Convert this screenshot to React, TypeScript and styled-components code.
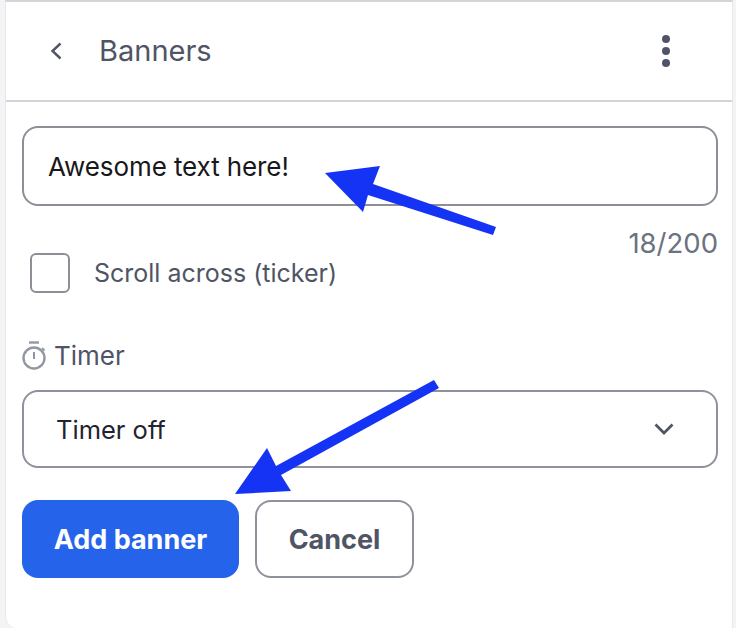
import styled, { createGlobalStyle } from 'styled-components';

const GlobalStyle = createGlobalStyle`
    html, body {
        margin: 0;
        padding: 0;
        background: #f3f4f6;
        font-family: 'Inter', 'Liberation Sans', sans-serif;
    }
`;

const Page = styled.div`
    position: relative;
    width: 736px;
    height: 628px;
    overflow: hidden;
    background: #f3f4f6;
    box-sizing: border-box;
    padding: 0 3px 0 5px;
`;

const Panel = styled.div`
    height: 100%;
    box-sizing: border-box;
    background: #fff;
    border-top: 2px solid #d4d4d8;
    border-left: 1px solid #e5e7eb;
    border-right: 1px solid #e5e7eb;
    border-bottom-left-radius: 12px;
`;

const Header = styled.div`
    height: 100px;
    box-sizing: border-box;
    border-bottom: 2px solid #d4d4d8;
    display: flex;
    align-items: center;
    padding: 0 62px 0 44px;
    color: #4b5563;
`;

const Title = styled.span`
    flex: 1;
    margin-left: 37px;
    font-size: 29px;
    line-height: 34px;
    color: #4f5565;
`;

const Body = styled.div`
    padding: 24px 14px 0 16px;
`;

const TextField = styled.div`
    height: 80px;
    box-sizing: border-box;
    border: 2px solid #8e8e96;
    border-radius: 16px;
    display: flex;
    align-items: center;
    padding: 0 24px;
    font-size: 26px;
    letter-spacing: -0.1px;
    color: #18181b;
`;

const Counter = styled.div`
    margin-top: 22px;
    text-align: right;
    font-size: 27.5px;
    line-height: 30px;
    color: #6b7280;
`;

const CheckRow = styled.label`
    display: flex;
    align-items: center;
    gap: 24px;
    margin: -5px 0 0 8px;
    font-size: 25px;
    line-height: 40px;
    color: #4f5565;
`;

const Checkbox = styled.span`
    width: 40px;
    height: 40px;
    box-sizing: border-box;
    border: 2.5px solid #8e8e96;
    border-radius: 6px;
`;

const FieldLabel = styled.div`
    display: flex;
    align-items: center;
    gap: 8px;
    margin-top: 45px;
    font-size: 26px;
    line-height: 36px;
    color: #4f5565;
`;

const SelectBox = styled.div`
    height: 78px;
    margin-top: 16px;
    box-sizing: border-box;
    border: 2px solid #8e929c;
    border-radius: 16px;
    display: flex;
    align-items: center;
    justify-content: space-between;
    padding: 0 42px 0 32px;
    font-size: 25.5px;
    color: #1f2430;
`;

const Actions = styled.div`
    display: flex;
    gap: 16px;
    margin-top: 32px;
`;

const Button = styled.button<{ $primary?: boolean }>`
    height: 78px;
    width: ${(p) => (p.$primary ? '217px' : '159px')};
    box-sizing: border-box;
    border: ${(p) => (p.$primary ? 'none' : '2px solid #8e929c')};
    border-radius: 16px;
    background: ${(p) => (p.$primary ? '#2563eb' : '#fff')};
    color: ${(p) => (p.$primary ? '#fff' : '#4f5565')};
    font-family: inherit;
    font-size: 27px;
    font-weight: 700;
    padding: 0;
`;

const ArrowLayer = styled.svg`
    position: absolute;
    left: 0;
    top: 0;
    pointer-events: none;
`;

export default function App() {
    return (
        <Page>
            <GlobalStyle />
            <Panel>
                <Header>
                    <svg width="12" height="18" viewBox="0 0 12 18" fill="none">
                        <path d="M10.5 1.5 2.5 9l8 7.5" stroke="#4f5565" strokeWidth="2.4" />
                    </svg>
                    <Title>Banners</Title>
                    <svg width="8" height="32" viewBox="0 0 8 32" fill="#50546a">
                        <circle cx="4" cy="4" r="4" />
                        <circle cx="4" cy="16" r="4" />
                        <circle cx="4" cy="28" r="4" />
                    </svg>
                </Header>
                <Body>
                    <TextField>Awesome text here!</TextField>
                    <Counter>18/200</Counter>
                    <CheckRow>
                        <Checkbox />
                        Scroll across (ticker)
                    </CheckRow>
                    <FieldLabel>
                        <svg width="24" height="30" viewBox="0 0 24 30" fill="none" stroke="#9298a3" strokeWidth="2.4">
                            <path d="M7 1.5h10" />
                            <circle cx="12" cy="17" r="10.5" />
                            <path d="M12 11v7" strokeWidth="2" />
                            <path d="m20 7 2.5 2.5" strokeWidth="2" />
                        </svg>
                        Timer
                    </FieldLabel>
                    <SelectBox>
                        Timer off
                        <svg width="20" height="12" viewBox="0 0 20 12" fill="none">
                            <path d="M1.5 1.5 10 10l8.5-8.5" stroke="#4f5565" strokeWidth="2.8" />
                        </svg>
                    </SelectBox>
                    <Actions>
                        <Button $primary>Add banner</Button>
                        <Button>Cancel</Button>
                    </Actions>
                </Body>
            </Panel>
            <ArrowLayer width="736" height="628" viewBox="0 0 736 628" fill="#1533f5">
                <polygon points="325,173 380,166 373,184 496,227 493,235 368,195 363,212" />
                <polygon points="235,494 267,448 276,466 434,380 439,388 281,475 291,491" />
            </ArrowLayer>
        </Page>
    );
}
